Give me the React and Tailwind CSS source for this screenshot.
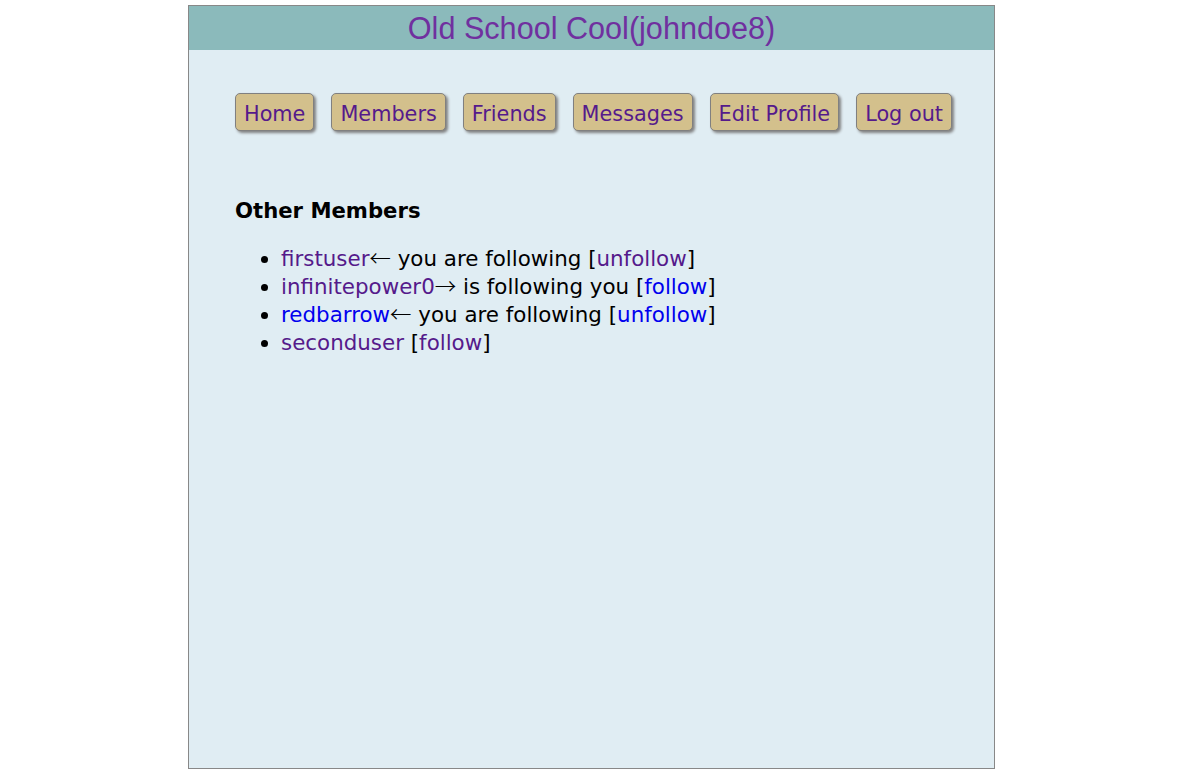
export default function App() {
  const navs = ["Home", "Members", "Friends", "Messages", "Edit Profile", "Log out"];
  const arrow = "font-['Noto_Sans_CJK_JP',sans-serif] font-light leading-[0]";
  return (
    <div className="w-full min-h-[773px] bg-white pt-[5px]">
      <div className="ml-[188px] w-[807px] h-[764px] border border-[#888888] bg-[#e0edf3] flex flex-col font-['DejaVu_Sans',Verdana,sans-serif]">
        <div className="h-[44px] bg-[#8bbabb] flex items-center justify-center text-[30.6px] text-[#70309f] leading-none font-['Liberation_Sans',Arial,sans-serif]">
          Old School Cool(johndoe8)
        </div>
        <nav className="pl-[46px] pt-[43px] flex gap-[17px]">
          {navs.map((n) => (
            <a key={n} className="h-[38px] px-[8px] pt-[5px] flex items-center bg-[#d3c08c] border border-[#808080] rounded-[5px] shadow-[2px_2px_3px_#808080] text-[#551a8b] text-[20.8px] leading-none">
              {n}
            </a>
          ))}
        </nav>
        <div className="pl-[46px] pt-[68px]">
          <h3 className="font-bold text-[21.2px] leading-[24px] text-black">Other Members</h3>
          <ul className="list-disc pl-[46px] mt-[22px] text-[21.4px] leading-[28px] text-black">
            <li>
              <a className="text-[#551a8b]">firstuser</a><span className={arrow}>←</span> you are following [<a className="text-[#551a8b]">unfollow</a>]
            </li>
            <li>
              <a className="text-[#551a8b]">infinitepower0</a><span className={arrow}>→</span> is following you [<a className="text-[#0000ee]">follow</a>]
            </li>
            <li>
              <a className="text-[#0000ee]">redbarrow</a><span className={arrow}>←</span> you are following [<a className="text-[#0000ee]">unfollow</a>]
            </li>
            <li>
              <a className="text-[#551a8b]">seconduser</a> [<a className="text-[#551a8b]">follow</a>]
            </li>
          </ul>
        </div>
      </div>
    </div>
  );
}
